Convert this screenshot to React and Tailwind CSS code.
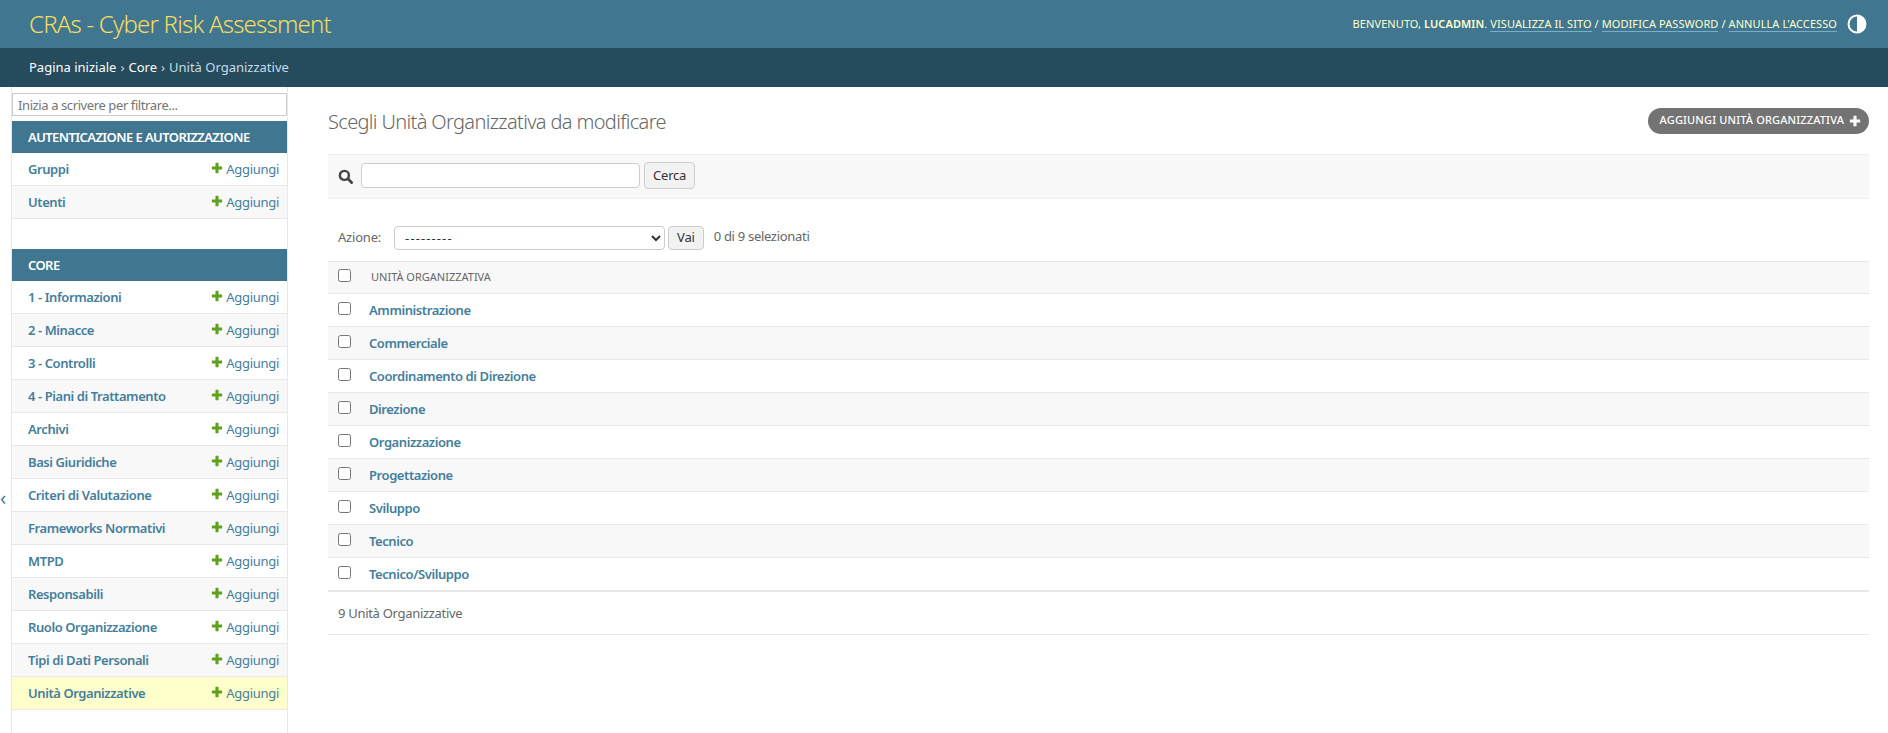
import React from "react";

const authModels = ["Gruppi", "Utenti"];
const coreModels = [
  "1 - Informazioni",
  "2 - Minacce",
  "3 - Controlli",
  "4 - Piani di Trattamento",
  "Archivi",
  "Basi Giuridiche",
  "Criteri di Valutazione",
  "Frameworks Normativi",
  "MTPD",
  "Responsabili",
  "Ruolo Organizzazione",
  "Tipi di Dati Personali",
  "Unità Organizzative",
];
const units = [
  "Amministrazione",
  "Commerciale",
  "Coordinamento di Direzione",
  "Direzione",
  "Organizzazione",
  "Progettazione",
  "Sviluppo",
  "Tecnico",
  "Tecnico/Sviluppo",
];

const PlusIcon = ({ className }) => (
  <svg viewBox="0 0 14 14" className={className} fill="currentColor">
    <path d="M5.2 1h3.2a.4.4 0 0 1 .4.4v3.8h3.8a.4.4 0 0 1 .4.4v2.8a.4.4 0 0 1-.4.4H8.8v3.8a.4.4 0 0 1-.4.4H5.6a.4.4 0 0 1-.4-.4V8.8H1.4a.4.4 0 0 1-.4-.4V5.6a.4.4 0 0 1 .4-.4h3.8V1.4a.4.4 0 0 1 .4-.4z" />
  </svg>
);

const SearchIcon = () => (
  <svg viewBox="0 0 16 16" className="h-[15px] w-[15px] text-[#444]" fill="none" stroke="currentColor">
    <circle cx="6.8" cy="6.8" r="4.8" strokeWidth="2.6" />
    <path d="M10.5 10.5l4 4" strokeWidth="3" strokeLinecap="round" />
  </svg>
);

const ThemeIcon = () => (
  <svg viewBox="0 0 20 20" className="h-[20px] w-[20px]">
    <circle cx="10" cy="10" r="8.5" fill="none" stroke="#fff" strokeWidth="2" />
    <path d="M10 1.5a8.5 8.5 0 0 1 0 17z" fill="#fff" />
  </svg>
);

function ModelRow({ name, odd, current }) {
  const bg = current ? "bg-[#ffffcc]" : odd ? "bg-white" : "bg-[#f8f8f8]";
  return (
    <div className={`flex h-[33px] items-center justify-between border-b border-[#e8e8e8] pl-[16px] pr-[8px] ${bg}`}>
      <span className="pt-[1px] text-[13px] font-semibold tracking-[-0.42px] text-[#447e9b]">{name}</span>
      <span className="flex items-center pt-[1px] text-[13px] tracking-[-0.3px] text-[#447e9b]">
        <PlusIcon className="mr-[3px] mb-[4px] h-[12px] w-[12px] text-[#5fa01c]" />
        Aggiungi
      </span>
    </div>
  );
}

function Module({ title, models, activeName }) {
  return (
    <div>
      <div className="flex h-[32px] items-center bg-[#417690] px-[16px] pt-[1px] text-[13px] font-semibold tracking-[-0.58px] text-white uppercase">
        {title}
      </div>
      {models.map((name, i) => (
        <ModelRow key={name} name={name} odd={i % 2 === 0} current={name === activeName} />
      ))}
    </div>
  );
}

export default function App() {
  return (
    <div className="min-h-[733px] bg-white font-['Noto_Sans','Open_Sans',sans-serif] text-[#333]">
      <header className="flex h-[48px] items-center justify-between bg-[#417690] pl-[29px] pr-[21px]">
        <h1 className="text-[24px] font-light tracking-[-0.8px] text-[#f5dd5d]">CRAs - Cyber Risk Assessment</h1>
        <div className="flex items-center gap-[10px]">
          <div className="text-[11px] tracking-[0.08px] uppercase text-[#ffc]">
            Benvenuto, <strong className="font-semibold">lucadmin</strong>.{" "}
            <span className="border-b border-[#79aec8]">Visualizza il sito</span> /{" "}
            <span className="border-b border-[#79aec8]">Modifica password</span> /{" "}
            <span className="border-b border-[#79aec8]">Annulla l'accesso</span>
          </div>
          <ThemeIcon />
        </div>
      </header>

      <nav className="flex h-[39px] items-center bg-[#264b5d] pl-[29px] text-[13px] text-[#79aec8]">
        <span className="text-white">Pagina iniziale</span>
        <span className="mx-[4px] text-[#c4dce8]">›</span>
        <span className="text-white">Core</span>
        <span className="mx-[4px] text-[#c4dce8]">›</span>
        <span className="text-[#c4dce8]">Unità Organizzative</span>
      </nav>

      <div className="flex">
        <div className="w-[12px] border-r border-[#e8e8e8] pt-[401px] text-[20px] leading-none text-[#447e9b]">‹</div>

        <aside className="flex min-h-[646px] w-[276px] flex-col border-r border-[#e8e8e8] pt-[6px]">
          <input
            placeholder="Inizia a scrivere per filtrare..."
            className="mb-[5px] h-[23px] w-full border border-[#ccc] bg-white px-[5px] text-[13px] tracking-[-0.4px] placeholder:text-[#757575]"
          />
          <Module title="Autenticazione e Autorizzazione" models={authModels} />
          <div className="h-[30px]" />
          <Module title="Core" models={coreModels} activeName="Unità Organizzative" />
        </aside>

        <main className="min-w-0 flex-1 pl-[40px] pr-[19px]">
          <div className="flex h-[67px] items-center justify-between">
            <h2 className="pt-[3px] text-[20px] font-light tracking-[-0.65px] text-[#666]">Scegli Unità Organizzativa da modificare</h2>
            <a className="flex h-[26px] items-center gap-[5px] rounded-full bg-[#737373] pl-[12px] pr-[8px] text-[11px] font-medium tracking-[0.15px] uppercase text-white">
              Aggiungi Unità Organizzativa
              <PlusIcon className="h-[12px] w-[12px] text-white" />
            </a>
          </div>

          <div className="flex h-[45px] items-center border-y border-[#eee] bg-[#f8f8f8] pl-[10px]">
            <SearchIcon />
            <input className="mb-[2px] ml-[8px] h-[25px] w-[279px] rounded-[4px] border border-[#ccc] bg-white" />
            <button className="mb-[2px] ml-[4px] h-[27px] rounded-[4px] border border-[#ccc] bg-[#f2f2f2] px-[8px] text-[13px] tracking-[-0.2px] text-[#333]">
              Cerca
            </button>
          </div>

          <div className="flex h-[62px] items-center pl-[10px] pt-[15px]">
            <label className="text-[13px] tracking-[-0.2px] text-[#666]">Azione:</label>
            <select className="ml-[13px] h-[24px] w-[271px] rounded-[4px] border border-[#ccc] bg-white pl-[6px] text-[13px] tracking-[1.1px] text-[#333]">
              <option>---------</option>
            </select>
            <button className="ml-[3px] h-[24px] rounded-[4px] border border-[#ccc] bg-[#f2f2f2] px-[8px] text-[13px] tracking-[-0.2px] text-[#333]">
              Vai
            </button>
            <span className="mb-[2px] ml-[10px] text-[13px] tracking-[-0.3px] text-[#666]">0 di 9 selezionati</span>
          </div>

          <div className="flex h-[33px] items-center border-y border-[#e8e8e8] bg-[#f8f8f8] pl-[10px]">
            <input type="checkbox" className="mb-[4px] h-[13px] w-[13px]" />
            <span className="ml-[20px] text-[11px] text-[#666] uppercase">Unità Organizzativa</span>
          </div>
          {units.map((unit, i) => (
            <div
              key={unit}
              className={`flex h-[33px] items-center border-b border-[#e8e8e8] pl-[10px] ${i % 2 === 0 ? "bg-white" : "bg-[#f8f8f8]"}`}
            >
              <input type="checkbox" className="mb-[3px] h-[13px] w-[13px]" />
              <span className="ml-[18px] pt-[1px] text-[13px] font-semibold tracking-[-0.42px] text-[#447e9b]">{unit}</span>
            </div>
          ))}

          <div className="flex h-[44px] items-center border-y border-[#e8e8e8] pl-[10px] pt-[1px] text-[13px] tracking-[-0.3px] text-[#666]">
            9 Unità Organizzative
          </div>
        </main>
      </div>
    </div>
  );
}
